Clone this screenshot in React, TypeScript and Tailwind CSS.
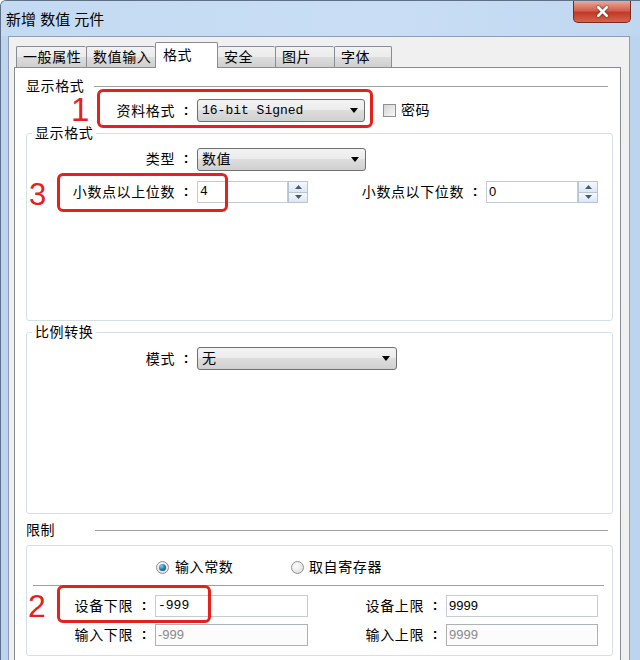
import { X } from "lucide-react";

const RED = "border-[#e6211c]";

// combobox in the old Windows 7 look
const Combo = ({ value, w, mono }: { value: string; w: string; mono?: boolean }) => (
  <div
    className={`${w} h-[23px] flex items-center justify-between border border-[#707070] rounded-[3px] bg-[linear-gradient(#f3f3f3,#ebebeb_50%,#dddddd_50%,#d0d0d0)] pl-[4px] pr-[6px]`}
  >
    <span className={mono ? "font-['Liberation_Mono',monospace] text-[13px]" : "text-[14px] tracking-[0.6px]"}>{value}</span>
    <svg width="8" height="5" viewBox="0 0 8 5">
      <path d="M0 0h8L4 5z" fill="#000" />
    </svg>
  </div>
);

const SpinInput = ({ value, w, mono }: { value: string; w: string; mono?: boolean }) => (
  <div className={`${w} h-[22px] flex`}>
    <div className="flex-1 flex items-center border border-[#c5cad3] bg-white pl-[2px]">
      <span className={mono ? "font-['Liberation_Mono',monospace] text-[13px]" : "text-[13px]"}>{value}</span>
    </div>
    <div className="w-[20px] flex flex-col">
      <div className="flex-1 flex items-center justify-center border border-[#b8c4d2] bg-[linear-gradient(#f4f8fc,#dce7f3)]">
        <svg width="7" height="4" viewBox="0 0 7 4">
          <path d="M0 4h7L3.5 0z" fill="#4a5a6e" />
        </svg>
      </div>
      <div className="flex-1 flex items-center justify-center border border-t-0 border-[#b8c4d2] bg-[linear-gradient(#f4f8fc,#dce7f3)]">
        <svg width="7" height="4" viewBox="0 0 7 4">
          <path d="M0 0h7L3.5 4z" fill="#4a5a6e" />
        </svg>
      </div>
    </div>
  </div>
);

const TextBox = ({ value, w, mono, disabled }: { value: string; w: string; mono?: boolean; disabled?: boolean }) => (
  <div
    className={`${w} h-[22px] flex items-center pl-[2px] border ${
      disabled ? "border-[#adb2b5] bg-[#fcfcfc] text-[#8a8a8a]" : "border-[#c5cad3] bg-white"
    }`}
  >
    <span className={mono ? "font-['Liberation_Mono',monospace] text-[13px]" : "text-[13px]"}>{value}</span>
  </div>
);

// label text, then the colon sitting in its own 22px cell before the field
const Label = ({ text, w }: { text: string; w: string }) => (
  <div className={`${w} flex justify-end items-center text-[14px] leading-[18px] whitespace-nowrap`}>
    <span className="tracking-[0.6px]">{text}</span>
    <span className="w-[22px] text-center font-bold relative -top-px">:</span>
  </div>
);

const Radio = ({ on }: { on?: boolean }) => (
  <div className="w-[13px] h-[13px] rounded-full border border-[#8e8f8f] bg-[radial-gradient(circle_at_40%_35%,#ffffff,#d6d6d6)] flex items-center justify-center">
    {on && <div className="w-[7px] h-[7px] rounded-full bg-[radial-gradient(circle_at_35%_30%,#7fd0f5,#1b6aa0_60%,#0f3e66)]" />}
  </div>
);

const Tab = ({ label, w, border }: { label: string; w: string; border: string }) => (
  <div
    className={`${w} ${border} h-[21px] flex items-center pl-[6px] border-[#898c95] rounded-t-[2px] bg-[linear-gradient(#f2f2f2,#ebebeb_50%,#dddddd_50%,#cfcfcf)] text-[14px] tracking-[0.6px]`}
  >
    {label}
  </div>
);

export default function App() {
  return (
    <div className="w-[640px] h-[660px] overflow-hidden flex flex-col bg-[#bcd4ee] border-l border-t border-[#5f7186] rounded-tl-[6px] font-['Liberation_Sans','Noto_Sans_CJK_SC',sans-serif] text-black">
      {/* title bar */}
      <div className="h-[35px] flex items-start bg-[linear-gradient(90deg,#c3daf2,#c9def4_60%,#c0d7f0)]">
        <div className="pl-[5px] pt-[10px] text-[15px] leading-[18px]">新增 数值 元件</div>
        <div className="ml-auto mr-[9px] w-[58px] h-[22px] rounded-b-[5px] border border-t-0 border-[#7a2a22] bg-[linear-gradient(#e9a99c,#d4604f_45%,#c23a27_55%,#d5644c)] flex items-center justify-center">
          <X size={17} strokeWidth={3.5} className="text-white drop-shadow-[0_0_1px_#5a1a10]" />
        </div>
      </div>

      {/* client area */}
      <div className="flex-1 ml-[7px] mr-[10px] bg-[#f0f0f0] border-l border-t border-r border-[#8e9db0] pt-[5px] pl-[5px] overflow-hidden">
        {/* tabs */}
        <div className="h-[25px] flex items-end ml-[2px]">
          <Tab label="一般属性" w="w-[70px]" border="border-l border-t" />
          <Tab label="数值输入" w="w-[69px]" border="border-l border-t" />
          <div className="relative z-10 -mb-px w-[63px] h-[26px] bg-white border border-b-0 border-[#898c95] rounded-t-[2px] pl-[7px] pt-[3px] text-[14px] tracking-[0.6px] leading-[18px]">
            格式
          </div>
          <Tab label="安全" w="w-[57px]" border="border-t" />
          <Tab label="图片" w="w-[59px]" border="border-l border-t" />
          <Tab label="字体" w="w-[58px]" border="border-l border-t border-r" />
        </div>

        {/* tab panel */}
        <div className="w-[607px] h-[600px] bg-white border border-[#898c95] pl-[11px] pr-[7px] pt-[10px]">
          <div className="h-[16px] flex items-center">
            <span className="text-[14px] tracking-[0.6px] leading-[16px]">显示格式</span>
            <div className="flex-1 h-px bg-[#a0a0a0] ml-[10px] mr-[5px]" />
          </div>

          <div className="relative mt-[5px] h-[23px] flex items-center">
            <Label text="资料格式" w="w-[171px]" />
            <Combo value="16-bit Signed" w="w-[168px]" mono />
            <div className="ml-[18px] w-[13px] h-[13px] border border-[#8f8f8f] bg-[linear-gradient(135deg,#d4d4d4,#f7f7f7)]" />
            <span className="ml-[5px] text-[14px] tracking-[0.6px]">密码</span>
            <div className={`absolute left-[71px] top-[-10px] w-[276px] h-[39px] border-[3px] ${RED} rounded-[6px]`} />
            <span className="absolute left-[45px] top-[-6px] text-[33px] leading-none text-[#e6211c]">1</span>
          </div>

          <fieldset className="mt-[3px] h-[196px] border border-[#d5dfe5] rounded-[3px]">
            <legend className="ml-[5px] px-[3px] text-[14px] tracking-[0.6px] leading-[16px]">显示格式</legend>
            <div className="mt-[7px] h-[22px] flex items-center">
              <Label text="类型" w="w-[170px]" />
              <Combo value="数值" w="w-[169px]" />
            </div>
            <div className="relative mt-[11px] h-[22px] flex items-center">
              <Label text="小数点以上位数" w="w-[170px]" />
              <SpinInput value="4" w="w-[111px]" mono />
              <Label text="小数点以下位数" w="w-[178px]" />
              <SpinInput value="0" w="w-[112px]" />
              <div className={`absolute left-[30px] top-[-8px] w-[171px] h-[39px] border-[3px] ${RED} rounded-[6px]`} />
              <span className="absolute left-[2px] top-[-2px] text-[31px] leading-none text-[#e6211c]">3</span>
            </div>
          </fieldset>

          <fieldset className="mt-[3px] h-[190px] border border-[#d5dfe5] rounded-[3px]">
            <legend className="ml-[5px] px-[3px] text-[14px] tracking-[0.6px] leading-[16px]">比例转换</legend>
            <div className="mt-[7px] h-[23px] flex items-center">
              <Label text="模式" w="w-[170px]" />
              <Combo value="无" w="w-[200px]" />
            </div>
          </fieldset>

          <div className="mt-[8px] h-[16px] flex items-center">
            <span className="text-[14px] tracking-[0.6px] leading-[16px]">限制</span>
            <div className="flex-1 h-px bg-[#a0a0a0] ml-[40px] mr-[5px]" />
          </div>

          <div className="mt-[7px] h-[111px] border border-[#d5dfe5] rounded-[3px]">
            <div className="mt-[13px] h-[16px] flex items-center pl-[129px]">
              <div className="w-[135px] flex items-center">
                <Radio on />
                <span className="ml-[6px] text-[14px] tracking-[0.6px] leading-[16px]">输入常数</span>
              </div>
              <Radio />
              <span className="ml-[5px] text-[14px] tracking-[0.6px] leading-[16px]">取自寄存器</span>
            </div>
            <div className="mt-[10px] ml-[6px] mr-[8px] h-px bg-[#a0a0a0]" />
            <div className="relative mt-[9px] h-[22px] flex items-center">
              <Label text="设备下限" w="w-[128px]" />
              <TextBox value="-999" w="w-[153px]" mono />
              <Label text="设备上限" w="w-[138px]" />
              <TextBox value="9999" w="w-[152px]" />
              <div className={`absolute left-[30px] top-[-10px] w-[154px] h-[38px] border-[3px] ${RED} rounded-[6px]`} />
              <span className="absolute left-[1px] top-[-5px] text-[32px] leading-none text-[#e6211c]">2</span>
            </div>
            <div className="mt-[7px] h-[22px] flex items-center">
              <Label text="输入下限" w="w-[128px]" />
              <TextBox value="-999" w="w-[153px]" disabled />
              <Label text="输入上限" w="w-[138px]" />
              <TextBox value="9999" w="w-[152px]" disabled />
            </div>
          </div>
        </div>
      </div>
    </div>
  );
}
